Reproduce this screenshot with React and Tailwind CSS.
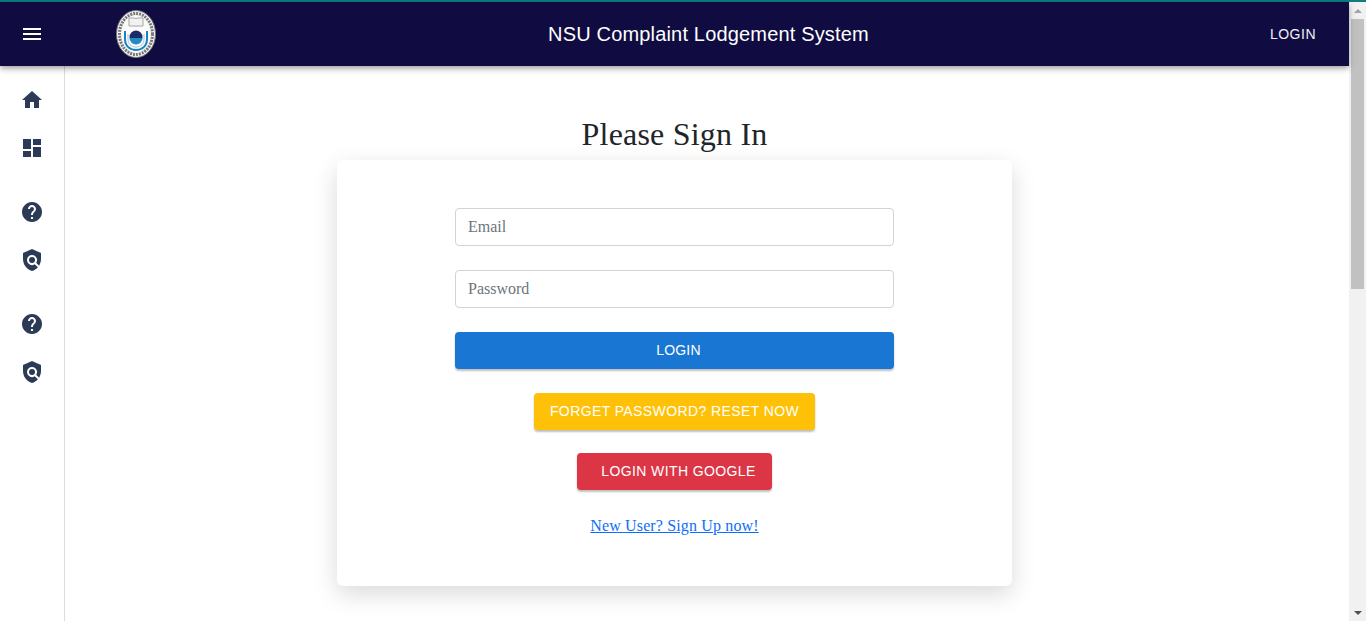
import React from "react";
import { MdMenu, MdHome, MdDashboard, MdHelp, MdPolicy } from "react-icons/md";

const NavItem = ({ icon: Icon }) => (
  <div className="flex items-center justify-center h-12 text-[#2b3a55]">
    <Icon size={24} />
  </div>
);

const Logo = () => (
  <svg width="40" height="48" viewBox="0 0 40 48">
    <ellipse cx="20" cy="24" rx="19.5" ry="23.5" fill="#f4f4f2" stroke="#77777c" strokeWidth="1" />
    <ellipse cx="20" cy="24" rx="16.5" ry="20.5" fill="none" stroke="#77777c" strokeWidth="3" strokeDasharray="2 1" />
    <ellipse cx="20" cy="24" rx="14" ry="18" fill="#fbfbfb" />
    <path d="M13 8h6l1 1 1-1h6v8h-14z" fill="#f2f2f2" stroke="#a5a5a9" strokeWidth="1" />
    <path d="M9 21v8c0 7 5 11 11 11s11-4 11-11v-8" fill="none" stroke="#1b7fc4" strokeWidth="2" />
    <path d="M12 24v5c0 5 3 8 8 8s8-3 8-8v-5" fill="none" stroke="#a5c8e0" strokeWidth="1" />
    <circle cx="20" cy="27" r="6.5" fill="#1c2a6b" />
    <path d="M13.5 28h13a6.5 6.5 0 0 1-13 0z" fill="#1f8cc4" />
  </svg>
);

const Scrollbar = () => (
  <div className="flex flex-col w-[17px] bg-[#f1f1f1] shrink-0">
    <div className="flex items-center justify-center h-[17px]">
      <div className="w-0 h-0 border-x-[4px] border-x-transparent border-b-[4px] border-b-[#a3a3a3]" />
    </div>
    <div className="h-[270px] mx-[2px] bg-[#c1c1c1]" />
    <div className="flex-1" />
    <div className="flex items-center justify-center h-[17px]">
      <div className="w-0 h-0 border-x-[4px] border-x-transparent border-t-[4px] border-t-[#505050]" />
    </div>
  </div>
);

const App = () => {
  return (
    <div className="flex flex-col h-[621px] overflow-hidden bg-white font-['Liberation_Serif',serif]">
      <div className="h-[2px] bg-[#0f7c80] shrink-0" />
      <div className="flex flex-1 min-h-0">
        <div className="flex flex-col flex-1 min-w-0">
          {/* Header */}
          <header className="relative z-10 flex items-center h-[64px] shrink-0 bg-[#100c41] text-white shadow-[0_2px_4px_-1px_rgba(0,0,0,0.2),0_4px_5px_0_rgba(0,0,0,0.14),0_1px_10px_0_rgba(0,0,0,0.12)] font-['Liberation_Sans',sans-serif]">
            <div className="flex items-center justify-center w-[64px] shrink-0">
              <MdMenu size={24} />
            </div>
            <div className="ml-[52px] shrink-0">
              <Logo />
            </div>
            <h1 className="flex-1 text-xl text-center pl-[148px] tracking-[0.17px]">NSU Complaint Lodgement System</h1>
            <div className="w-[236px] text-sm text-right pr-[33px] tracking-[0.5px] text-[#f0f0f5]">LOGIN</div>
          </header>

          <div className="flex flex-1 min-h-0">
            {/* Sidebar */}
            <aside className="flex flex-col w-[65px] shrink-0 pt-[10px] gap-4 border-r border-[#dcdcdc]">
              <div>
                <NavItem icon={MdHome} />
                <NavItem icon={MdDashboard} />
              </div>
              <div>
                <NavItem icon={MdHelp} />
                <NavItem icon={MdPolicy} />
              </div>
              <div>
                <NavItem icon={MdHelp} />
                <NavItem icon={MdPolicy} />
              </div>
            </aside>

            {/* Sign in */}
            <main className="flex flex-col items-center flex-1 pr-[65px] pt-[46px]">
              <h2 className="h-[48px] text-[32px] leading-[44px] text-[#212529] tracking-[0.2px]">Please Sign In</h2>
              <form className="flex flex-col items-center w-[675px] h-[426px] px-[118px] pt-[48px] bg-white rounded-md shadow-[0_8px_24px_rgba(0,0,0,0.15)]">
                <input
                  type="text"
                  placeholder="Email"
                  className="w-full h-[38px] px-3 mb-6 text-base border border-[#ced4da] rounded placeholder-[#6c757d]"
                />
                <input
                  type="password"
                  placeholder="Password"
                  className="w-full h-[38px] px-3 mb-6 text-base border border-[#ced4da] rounded placeholder-[#6c757d]"
                />
                <button
                  type="button"
                  className="w-full h-[37px] pl-2 pb-[2px] mb-6 text-sm text-white bg-[#1976d2] rounded shadow-[0_2px_2px_rgba(0,0,0,0.25)] font-['Liberation_Sans',sans-serif] tracking-[0.2px]"
                >
                  LOGIN
                </button>
                <button
                  type="button"
                  className="w-[281px] h-[37px] pb-[2px] mb-[23px] text-sm text-white bg-[#ffc107] rounded shadow-[0_2px_2px_rgba(0,0,0,0.25)] font-['Liberation_Sans',sans-serif] tracking-[0.4px]"
                >
                  FORGET PASSWORD? RESET NOW
                </button>
                <button
                  type="button"
                  className="w-[195px] h-[37px] pl-2 pb-[2px] mb-6 text-sm text-white bg-[#dc3545] rounded shadow-[0_2px_2px_rgba(0,0,0,0.25)] font-['Liberation_Sans',sans-serif] tracking-[0.4px]"
                >
                  LOGIN WITH GOOGLE
                </button>
                <a href="#" className="text-base text-[#0d6efd] underline tracking-[0.14px]">
                  New User? Sign Up now!
                </a>
              </form>
            </main>
          </div>
        </div>
        <Scrollbar />
      </div>
    </div>
  );
};

export default App;
